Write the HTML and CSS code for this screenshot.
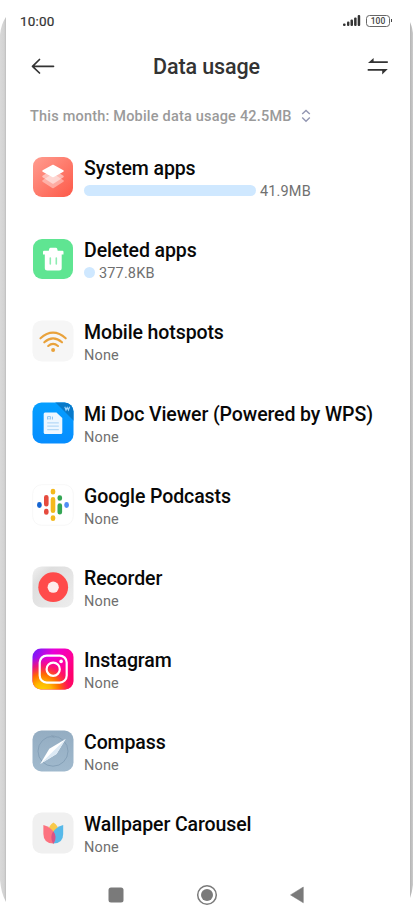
FILE: index.html
```html
<!DOCTYPE html>
<html lang="en">
<head>
<meta charset="utf-8">
<title>Data usage</title>
<link rel="stylesheet" href="styles.css">
</head>
<body>
<div class="phone">
  <svg class="edges" width="413" height="920" viewBox="0 0 413 920">
    <defs>
      <linearGradient id="edgeL"><stop offset="0" stop-color="#d9d9d9"/><stop offset=".7" stop-color="#d2d2d2"/><stop offset="1" stop-color="#bdbdbd"/></linearGradient>
      <linearGradient id="edgeR"><stop offset="0" stop-color="#b4b4b4"/><stop offset="1" stop-color="#cdcdcd"/></linearGradient>
    </defs>
    <path d="M6 17Q1 24 0 35V880Q1 893 6 902Z" fill="url(#edgeL)"/>
    <path d="M410 22Q412 26 413 33V885Q412 893 410 898Z" fill="url(#edgeR)"/>
  </svg>
  <div class="status">
    <span class="clock">10:00</span>
    <svg class="signal" width="18" height="12" viewBox="0 0 18 12" fill="#333"><rect x="0" y="8.600" width="2.600" height="2.400" rx="1"/><rect x="4" y="6.600" width="2.400" height="4.400" rx="1"/><rect x="7.500" y="4.600" width="2.500" height="6.400" rx="1"/><rect x="11.100" y="2.400" width="2.500" height="8.600" rx="1"/><rect x="14.700" y="0" width="2.500" height="11" rx="1"/></svg>
    <span class="battery">100</span>
  </div>
  <header class="bar">
    <svg width="24" height="18" viewBox="0 0 24 18" fill="none" stroke="#333" stroke-width="1.700" stroke-linecap="round" stroke-linejoin="round"><path d="M22.500 8.300H1.500M8.500 1.500L1.500 8.300L8.500 15"/></svg>
    <h1>Data usage</h1>
    <svg width="22" height="18" viewBox="0 0 22 18" fill="#333"><path d="M1 5L6.600 0V3.200H20.800V5ZM20.800 10.900L15.200 16.400V12.800H.7V10.900Z"/></svg>
  </header>
  <div class="summary"><span>This month: Mobile data usage 42.5MB</span>
    <svg width="10" height="14" viewBox="0 0 10 14" fill="none" stroke="#9296b2" stroke-width="1.400"><path d="M1.200 5.100L5 1.500L8.800 5.100M1.200 8.600L5 12.200L8.800 8.600"/></svg>
  </div>
  <main class="list">
    <div class="row">
      <svg class="icon" viewBox="0 0 42 42"><defs><linearGradient id="sys" x1="0" y1="0" x2="1" y2="1"><stop stop-color="#ff9d90"/><stop offset="1" stop-color="#fd5948"/></linearGradient></defs><rect x="1" y="1" width="40" height="40" rx="9" fill="url(#sys)"/><g fill="#fff" stroke="#fff" stroke-width="1.500" stroke-linejoin="round"><path opacity=".4" d="M21 18.500L31 25L21 31.500L11 25Z"/><path opacity=".5" d="M21 14L31 20.500L21 27L11 20.500Z"/><path d="M21 9.500L31 15L21 20.500L11 15Z"/></g></svg>
      <div class="info"><h2>System apps</h2><div class="usage"><i class="meter" style="width:172px"></i><span>41.9MB</span></div></div>
    </div>
    <div class="row">
      <svg class="icon" viewBox="0 0 42 42"><rect x="1" y="1" width="40" height="40" rx="9" fill="#5fe592"/><path d="M16.800 12.800L17.300 10.700Q17.600 9.700 18.600 9.700H23.900Q24.900 9.700 25.200 10.700L25.700 12.800H30.500Q31.500 12.800 31.500 14V16.500H29.700V30Q29.700 32.500 27.200 32.500H15.300Q12.800 32.500 12.800 30V16.500H11V14Q11 12.800 12 12.800Z" fill="#fff"/><path d="M18.300 20V26M24.300 20V26" stroke="#8eedb2" stroke-width="1.600" stroke-linecap="round"/></svg>
      <div class="info"><h2>Deleted apps</h2><div class="usage"><i class="meter" style="width:11px"></i><span>377.8KB</span></div></div>
    </div>
    <div class="row">
      <svg class="icon" viewBox="0 0 42 42"><rect x=".5" y=".5" width="41" height="41" rx="9" fill="#f6f6f6"/><g fill="none" stroke="#e9a23b" stroke-width="2.100" stroke-linecap="round"><path d="M8.500 18.300Q21 7 33.700 18.300M12.300 22.300Q21 14.500 30 22.300M16.200 26Q21 21.700 26 26"/></g><circle cx="21.100" cy="30" r="2" fill="#e9a23b"/></svg>
      <div class="info"><h2>Mobile hotspots</h2><div class="usage"><span>None</span></div></div>
    </div>
    <div class="row">
      <svg class="icon" viewBox="0 0 42 42"><defs><linearGradient id="doc" x2="0" y2="1"><stop stop-color="#059fff"/><stop offset="1" stop-color="#078dff"/></linearGradient><clipPath id="docClip"><rect x=".5" y=".5" width="41" height="41" rx="9"/></clipPath></defs><g clip-path="url(#docClip)"><path d="M0 0H42V42H0Z" fill="url(#doc)"/><path d="M23 0H42V19Z" fill="#0879c9"/></g><path d="M13 10.500H24.500L30.300 16V30.500Q30.300 32 28.800 32H13.200Q11.700 32 11.700 30.500V12Q11.700 10.500 13 10.500Z" fill="#eef7ff"/><path d="M15.500 17.500V14.600H18.600V17.500M17 15.800V17.500M20.500 14.600V17.500" stroke="#8fc5f3" stroke-width="1" fill="none"/><path d="M15.200 20.800H26.800M15.200 24.200H26.800M15.200 27.600H26.800" stroke="#b5d9f7" stroke-width="1.200"/><path d="M32.800 4.800L34 8L35.200 5.500L36.400 8L37.600 4.800" fill="none" stroke="#a5d9ff" stroke-width="1.100"/></svg>
      <div class="info"><h2>Mi Doc Viewer (Powered by WPS)</h2><div class="usage"><span>None</span></div></div>
    </div>
    <div class="row">
      <svg class="icon" viewBox="0 0 42 42"><rect x=".7" y=".7" width="40.600" height="40.600" rx="9" fill="#fff" stroke="#f5f5f5" stroke-width=".8"/><g stroke-linecap="round" stroke-width="4.600"><path d="M7.400 20.400V21.600" stroke="#1565d2"/><path d="M14.300 13.200V20.200M14.300 27V28.400" stroke="#e64b3e"/><path d="M21 7V8.200M21 15.400V26.800M21 33.500V34.700" stroke="#f4b91c"/><path d="M27.800 13.600V14.500M27.800 21.500V28.200" stroke="#34a654"/><path d="M34.600 20.400V21.600" stroke="#508df4"/></g></svg>
      <div class="info"><h2>Google Podcasts</h2><div class="usage"><span>None</span></div></div>
    </div>
    <div class="row">
      <svg class="icon" viewBox="0 0 42 42"><defs><linearGradient id="rec" x1="0" y1="0" x2="1" y2="1"><stop stop-color="#f2f2f2"/><stop offset=".25" stop-color="#dedede"/><stop offset="1" stop-color="#eee"/></linearGradient></defs><rect x=".5" y=".5" width="41" height="41" rx="9" fill="url(#rec)"/><circle cx="21.200" cy="21.200" r="14.900" fill="#ff4b4b"/><circle cx="21.200" cy="21.200" r="5.600" fill="#ffecec"/></svg>
      <div class="info"><h2>Recorder</h2><div class="usage"><span>None</span></div></div>
    </div>
    <div class="row">
      <svg class="icon" viewBox="0 0 42 42"><defs><linearGradient id="igBase" x1="0" y1="0" x2="1" y2=".6"><stop stop-color="#6420ff"/><stop offset=".4" stop-color="#e800d8"/><stop offset=".75" stop-color="#ff00a0"/><stop offset="1" stop-color="#ff0069"/></linearGradient><radialGradient id="igWarm" cx=".25" cy="1.050" r=".85"><stop stop-color="#ffd600"/><stop offset=".25" stop-color="#ffb800"/><stop offset=".5" stop-color="#ff6a00"/><stop offset=".75" stop-color="#ff1a50" stop-opacity=".7"/><stop offset="1" stop-color="#ff0080" stop-opacity="0"/></radialGradient></defs><rect x=".5" y=".5" width="41" height="41" rx="8.500" fill="url(#igBase)"/><rect x=".5" y=".5" width="41" height="41" rx="8.500" fill="url(#igWarm)"/><g fill="none" stroke="#fff" stroke-width="2.200"><rect x="7.700" y="7.600" width="27" height="27" rx="7"/><circle cx="21.200" cy="21.200" r="6.600"/></g><circle cx="29.100" cy="13.400" r="1.800" fill="#fff"/></svg>
      <div class="info"><h2>Instagram</h2><div class="usage"><span>None</span></div></div>
    </div>
    <div class="row">
      <svg class="icon" viewBox="0 0 42 42"><defs><linearGradient id="cmp" x2="0" y2="1"><stop stop-color="#94adc2"/><stop offset="1" stop-color="#a0b9cd"/></linearGradient></defs><rect x=".5" y=".5" width="41" height="41" rx="9" fill="url(#cmp)"/><circle cx="21" cy="21.200" r="15" fill="none" stroke="#7f9bb3" stroke-width=".8"/><path d="M19 6.500H23" stroke="#95aec3" stroke-width="2"/><path d="M20 7.500V5.500L22 7.500V5.500" stroke="#7892a9" stroke-width=".6" fill="none"/><path d="M33.700 9L24.500 24L8.200 34L17.300 18.800Z" fill="#fff"/><path d="M33.700 9L24.500 24L8.200 34Z" fill="#dce9f4"/></svg>
      <div class="info"><h2>Compass</h2><div class="usage"><span>None</span></div></div>
    </div>
    <div class="row">
      <svg class="icon" viewBox="0 0 42 42"><rect x=".5" y=".5" width="41" height="41" rx="9" fill="#f0f0f0"/><path d="M21.400 10.500Q26.500 13.500 27 20H16Q16.500 13.500 21.400 10.500Z" fill="#f8c94a"/><path d="M31.200 13V22Q31.200 31.500 21 31.500C17.500 24 21 15.500 31.200 13Z" fill="#57b9e9"/><path d="M11.400 13V22Q11.400 31.500 21.600 31.500C25.600 24 21.600 15.500 11.400 13Z" fill="#fc727f"/><path d="M21.300 19.300Q25.800 25 21.600 31.500H21Q17.400 25 21.300 19.300Z" fill="#d65488"/></svg>
      <div class="info"><h2>Wallpaper Carousel</h2><div class="usage"><span>None</span></div></div>
    </div>
  </main>
  <nav class="nav">
    <svg width="16" height="16" viewBox="0 0 16 16"><rect x=".5" y=".5" width="15" height="15" rx="2.500" fill="#7a7a7a"/></svg>
    <svg width="22" height="22" viewBox="0 0 22 22"><circle cx="11" cy="11" r="9.300" fill="none" stroke="#7a7a7a" stroke-width="1.500"/><circle cx="11" cy="11" r="6" fill="#7a7a7a"/></svg>
    <svg width="14" height="18" viewBox="0 0 14 18"><path d="M13.300 1V16.800L.5 8.900Z" fill="#7a7a7a" stroke="#7a7a7a" stroke-width=".5" stroke-linejoin="round"/></svg>
  </nav>
</div>
</body>
</html>
```
FILE: styles.css
```css
* { box-sizing: border-box; }
body { margin: 0; background: #fff; font-family: Roboto, "Liberation Sans", sans-serif; }
h1, h2 { margin: 0; font-weight: 500; }
svg { display: block; flex: none; }
.phone { position: relative; width: 413px; height: 920px; overflow: hidden; display: flex; flex-direction: column; }
.edges { position: absolute; left: 0; top: 0; }
.status { height: 42px; padding: 0 23px 0 20px; display: flex; align-items: center; }
.clock { font-size: 13.5px; font-weight: 400; color: #333; letter-spacing: .15px; -webkit-text-stroke: .2px #333; }
.signal { margin-left: auto; margin-right: 5px; }
.battery { position: relative; width: 24px; height: 12px; border: 1.5px solid #666; border-radius: 3.5px; font-size: 8.5px; line-height: 10px; font-weight: 500; color: #444; text-align: center; }
.battery::after { content: ""; position: absolute; right: -3px; top: 3px; width: 1px; height: 3px; background: #444; }
.bar { height: 50px; padding: 0 24px 0 31px; display: flex; align-items: center; }
.bar h1 { margin: 0 auto 0 98px; font-size: 21.5px; line-height: 28px; color: #333; letter-spacing: -.1px; }
.summary { height: 50px; padding: 0 0 2px 30px; display: flex; align-items: center; gap: 9px; font-size: 14.5px; font-weight: 500; color: #9a9a9a; letter-spacing: .2px; }
.list { padding: 14px 20px 0 32px; }
.row { height: 82px; display: flex; gap: 10px; }
.icon { width: 42px; height: 42px; }
.info { white-space: nowrap; padding-top: 1px; }
.info h2 { font-size: 19.5px; line-height: 24px; color: #080808; letter-spacing: -.1px; }
.usage { display: flex; align-items: center; gap: 4px; height: 20px; font-size: 14.5px; color: #707070; letter-spacing: .15px; }
.meter { height: 11px; border-radius: 6px; background: #cfe8ff; margin-top: -2px; }
.nav { position: absolute; left: 0; bottom: 14px; width: 413px; height: 22px; padding: 0 109px 0 108px; display: flex; align-items: center; justify-content: space-between; }
```
